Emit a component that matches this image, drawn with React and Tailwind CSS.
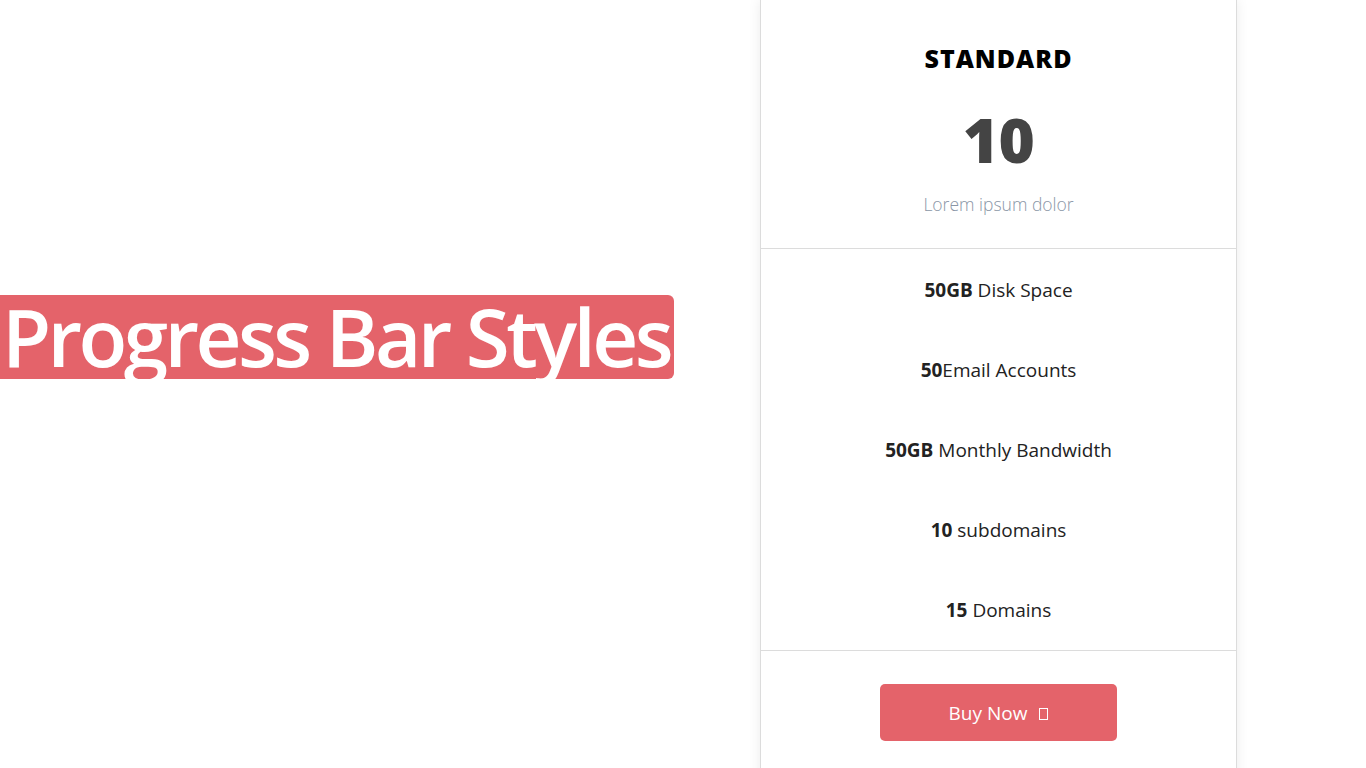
export default function App() {
  const features = [
    { bold: '50GB', text: ' Disk Space' },
    { bold: '50', text: 'Email Accounts' },
    { bold: '50GB', text: ' Monthly Bandwidth' },
    { bold: '10', text: ' subdomains' },
    { bold: '15', text: ' Domains' },
  ];

  return (
    <div className="h-screen w-full overflow-hidden bg-white flex" style={{ fontFamily: '"Open Sans", "Noto Sans", sans-serif' }}>
      {/* Title */}
      <div className="w-[760px] shrink-0 pt-[295px]">
        <h1 className="inline-block h-[84px] bg-[#e4636a] rounded-r-[6px] pl-[2px] pr-[4px] text-white text-[80px] leading-[82px] tracking-[-0.045em] font-semibold">
          Progress Bar Styles
        </h1>
      </div>

      {/* Pricing card */}
      <div className="w-[477px] shrink-0 h-[800px] bg-white border-x border-[#dcdcdc] shadow-[0_0_12px_rgba(0,0,0,0.08)] flex flex-col">
        <div className="h-[249px] border-b border-[#dcdcdc] flex flex-col items-center pt-[42px]">
          <h2 className="text-[25px] leading-[32px] font-extrabold text-black tracking-[0.04em]">STANDARD</h2>
          <div className="mt-[35px] text-[62px] leading-[60px] font-extrabold text-[#444] tracking-[-0.01em]">10</div>
          <p className="mt-[23px] text-[17.5px] leading-[24px] font-light text-[#8a96a6]">Lorem ipsum dolor</p>
        </div>

        <ul className="flex flex-col border-b border-[#dcdcdc] pb-[1px]">
          {features.map((f, i) => (
            <li key={i} className="h-[80px] pt-[2px] flex items-center justify-center text-[19px] text-[#222]">
              <span>
                <b className="font-bold">{f.bold}</b>
                {f.text}
              </span>
            </li>
          ))}
        </ul>

        <div className="flex justify-center pt-[33px]">
          <button className="w-[237px] h-[57px] pt-[2px] bg-[#e4636a] rounded-[5px] text-white text-[19px] flex items-center justify-center gap-[12px]">
            <span>Buy Now</span>
            <span className="inline-block w-[9px] h-[12px] border border-white"></span>
          </button>
        </div>
      </div>
    </div>
  );
}
